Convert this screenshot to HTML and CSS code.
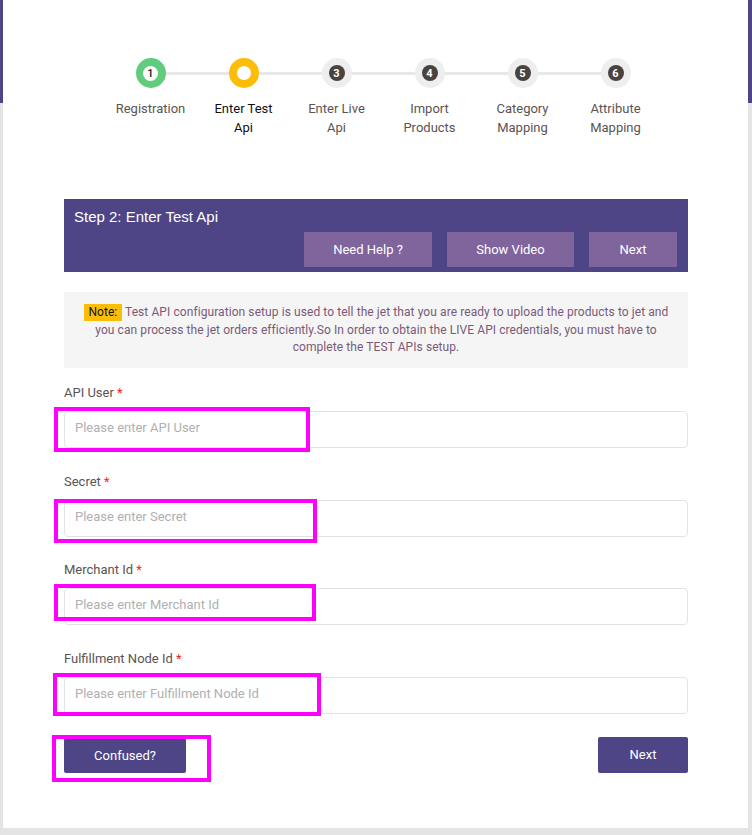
FILE: index.html
```html
<!DOCTYPE html>
<html>
<head>
<meta charset="utf-8">
<link rel="stylesheet" href="styles.css">
</head>
<body>
<div class="panel">
  <div class="stepper">
    <div class="step done"><span class="dot"><span class="inner">1</span></span><div class="label">Registration</div></div>
    <div class="step active"><span class="dot"><span class="inner"></span></span><div class="label">Enter Test Api</div></div>
    <div class="step"><span class="dot"><span class="inner">3</span></span><div class="label">Enter Live Api</div></div>
    <div class="step"><span class="dot"><span class="inner">4</span></span><div class="label">Import Products</div></div>
    <div class="step"><span class="dot"><span class="inner">5</span></span><div class="label">Category Mapping</div></div>
    <div class="step last"><span class="dot"><span class="inner">6</span></span><div class="label">Attribute Mapping</div></div>
  </div>

  <div class="content">
    <div class="banner">
      <div class="banner-title">Step 2: Enter Test Api</div>
      <div class="banner-actions">
        <button class="bbtn help">Need Help ?</button>
        <button class="bbtn video">Show Video</button>
        <button class="bbtn nx">Next</button>
      </div>
    </div>

    <div class="note">
      <span class="note-tag">Note:</span> Test API configuration setup is used to tell the jet that you are ready to upload the products to jet and you can process the jet orders efficiently.So In order to obtain the LIVE API credentials, you must have to complete the TEST APIs setup.
    </div>

    <div class="field">
      <label>API User <span class="req">*</span></label>
      <input type="text" placeholder="Please enter API User">
    </div>
    <div class="field">
      <label>Secret <span class="req">*</span></label>
      <input type="text" placeholder="Please enter Secret">
    </div>
    <div class="field">
      <label>Merchant Id <span class="req">*</span></label>
      <input type="text" placeholder="Please enter Merchant Id">
    </div>
    <div class="field">
      <label>Fulfillment Node Id <span class="req">*</span></label>
      <input type="text" placeholder="Please enter Fulfillment Node Id">
    </div>

    <div class="actions">
      <button class="pbtn confused">Confused?</button>
      <button class="pbtn next">Next</button>
    </div>
  </div>
</div>

<div class="mark m1"></div>
<div class="mark m2"></div>
<div class="mark m3"></div>
<div class="mark m4"></div>
<div class="mark m5"></div>
</body>
</html>
```

FILE: styles.css
```css
* { box-sizing: border-box; }
html, body { margin: 0; padding: 0; }
body {
  width: 752px;
  height: 835px;
  overflow: hidden;
  position: relative;
  background: linear-gradient(to bottom, #4e4587 0, #4e4587 103px, #e4e4e4 103px, #e4e4e4 100%);
  font-family: Roboto, "Liberation Sans", sans-serif;
}
.panel {
  margin-left: 3px;
  width: 745px;
  height: 828px;
  background: #fff;
  padding-top: 58px;
}
.stepper {
  display: flex;
  padding-left: 101px;
}
.step {
  width: 93px;
  display: flex;
  flex-direction: column;
  align-items: center;
  position: relative;
}
.step::after {
  content: "";
  position: absolute;
  left: 50%;
  top: 14px;
  width: 93px;
  height: 3px;
  background: #e8e8e8;
  z-index: 0;
}
.step.last::after { display: none; }
.dot {
  width: 30px;
  height: 30px;
  border-radius: 50%;
  background: #eeeeee;
  display: flex;
  align-items: center;
  justify-content: center;
  position: relative;
  z-index: 1;
}
.dot .inner {
  width: 16px;
  height: 16px;
  border-radius: 50%;
  background: #4a4240;
  color: #fff;
  font-size: 11px;
  font-weight: bold;
  display: flex;
  align-items: center;
  justify-content: center;
  line-height: 1;
}
.step.done .dot { background: #5fcd7b; }
.step.done .inner { background: #fff; color: #111; width: 15px; height: 15px; font-weight: 500; }
.step.active .dot { background: #fbbd08; }
.step.active .inner { background: #fff; width: 14px; height: 14px; }
.label {
  margin-top: 11px;
  font-size: 13px;
  line-height: 19px;
  color: #5a5453;
  text-align: center;
  width: 70px;
}
.step.active .label { color: #111; }

.content {
  margin-top: 62px;
  margin-left: 61px;
  width: 624px;
}
.banner {
  background: #4e4587;
  height: 73px;
  padding: 9px 11px 5px 10px;
  display: flex;
  flex-direction: column;
}
.banner-title {
  font-family: "Liberation Sans", Arial, sans-serif;
  font-size: 15px;
  line-height: 18px;
  color: #fff;
}
.banner-actions {
  margin-top: 6px;
  display: flex;
  justify-content: flex-end;
  gap: 15px;
}
.bbtn {
  height: 35px;
  border: 0;
  border-radius: 0;
  background: #80649c;
  color: #fff;
  font-family: Roboto, "Liberation Sans", sans-serif;
  font-size: 13px;
  padding: 0;
}
.help { width: 128px; }
.video { width: 127px; }
.nx { width: 88px; }
.note {
  margin-top: 20px;
  background: #f5f5f5;
  height: 76px;
  padding: 12px 16px 0;
  text-align: center;
  font-size: 12px;
  line-height: 17.5px;
  letter-spacing: 0.08px;
  color: #7a5a79;
}
.note-tag {
  display: inline-block;
  background: #fbbd08;
  color: #111;
  line-height: 17px;
  padding: 0 5px;
  letter-spacing: 0;
}
.field {
  display: flex;
  flex-direction: column;
}
.note + .field { margin-top: 16px; }
.field + .field { margin-top: 24.5px; }
.field label {
  font-size: 13px;
  line-height: 18px;
  color: #5a5453;
  margin-bottom: 9px;
}
.req { color: #ff1a1a; }
.field input {
  height: 37px;
  border: 1px solid #e3e3e3;
  border-radius: 4px;
  padding: 0 10px 4px;
  font-family: Roboto, "Liberation Sans", sans-serif;
  font-size: 13px;
  color: #333;
  outline: none;
}
.field input::placeholder { color: #b0b0b0; }
.actions {
  margin-top: 23px;
  display: flex;
  justify-content: space-between;
  align-items: flex-start;
}
.pbtn {
  height: 36px;
  border: 0;
  border-radius: 2px;
  background: #4e4587;
  color: #fff;
  font-family: Roboto, "Liberation Sans", sans-serif;
  font-size: 13px;
}
.confused { width: 122px; margin-top: 1px; height: 35px; }
.next { width: 90px; }

.mark {
  position: absolute;
  border: 4px solid #ff00ff;
  pointer-events: none;
}
.m1 { left: 54px; top: 407px; width: 256px; height: 45px; }
.m2 { left: 54px; top: 499px; width: 263px; height: 44px; }
.m3 { left: 54px; top: 584px; width: 262px; height: 37px; }
.m4 { left: 53px; top: 673px; width: 268px; height: 43px; }
.m5 { left: 52px; top: 735px; width: 159px; height: 47px; }
```
